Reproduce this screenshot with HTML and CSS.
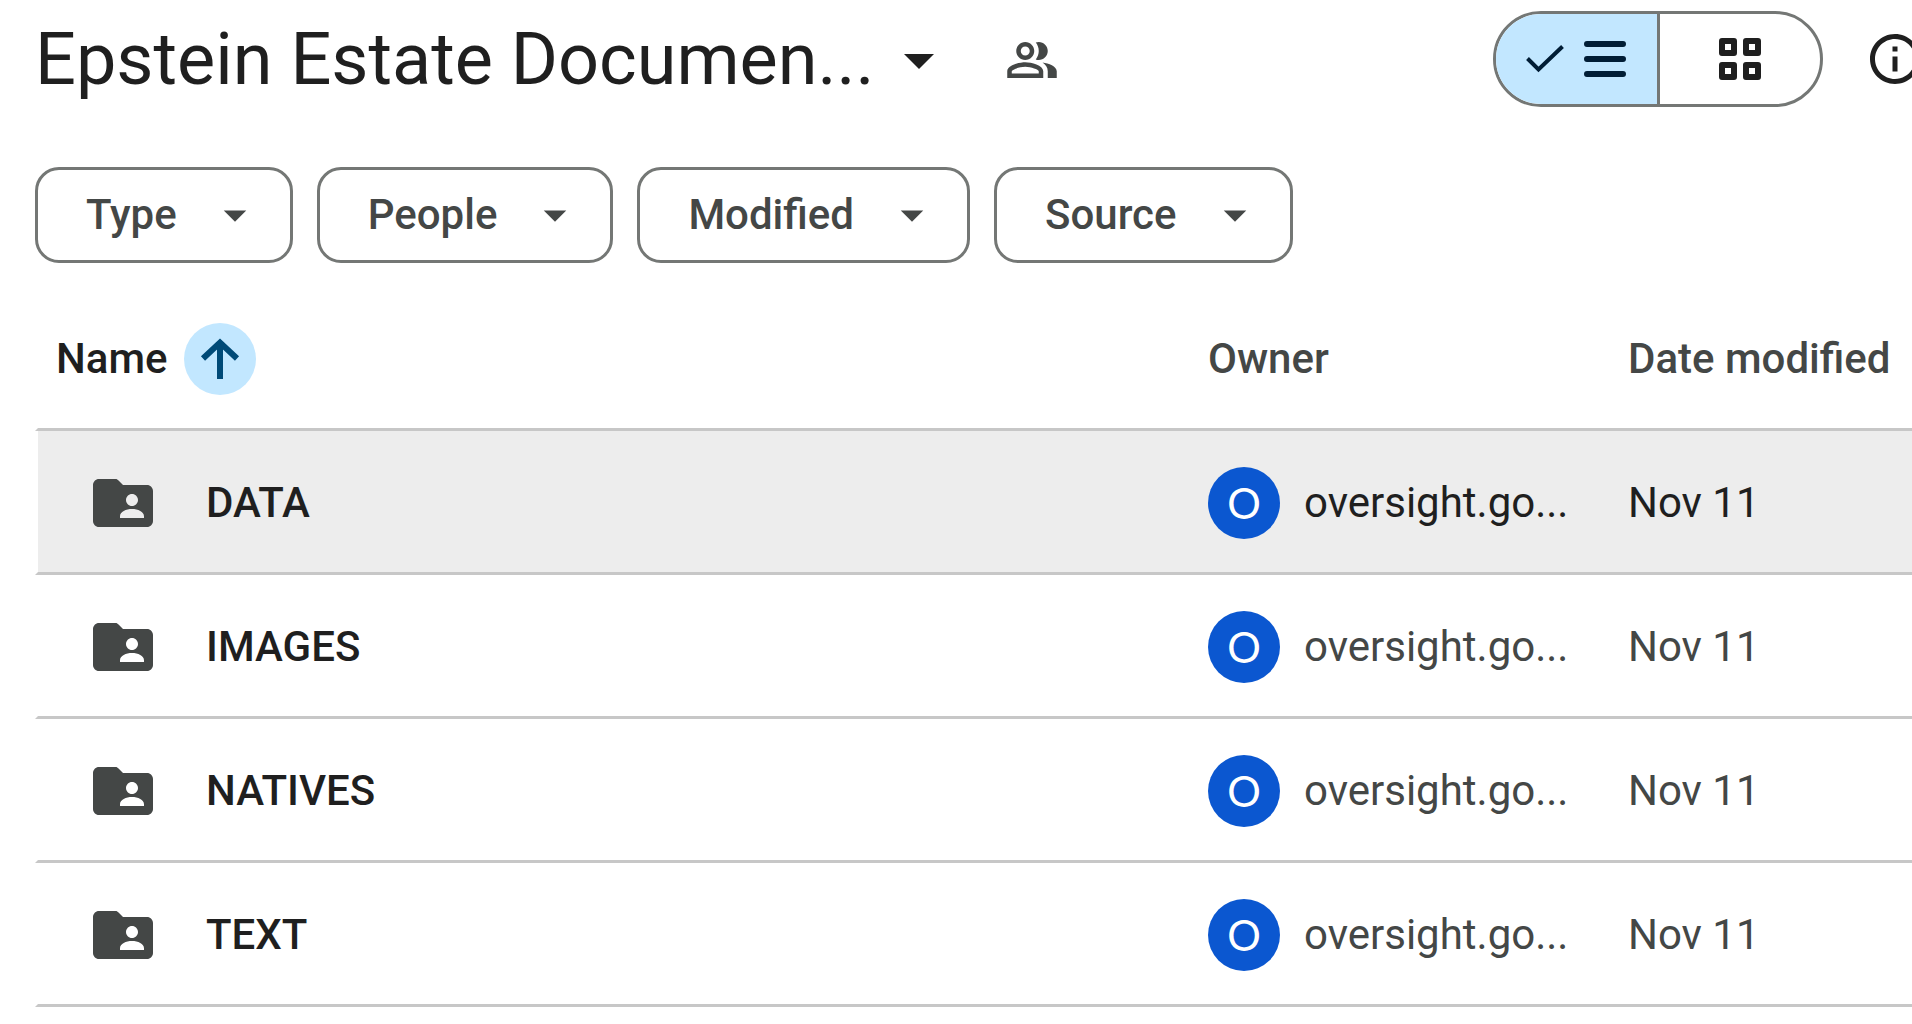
FILE: index.html
```html
<!DOCTYPE html>
<html lang="en">
<head>
  <meta charset="UTF-8">
  <title>Epstein Estate Documents</title>
  <link rel="stylesheet" href="styles.css">
</head>
<body>

<!-- shared icons -->
<svg class="sprite" aria-hidden="true">
  <symbol id="caret" viewBox="0 0 24 24"><path d="M7 10l5 5 5-5z"/></symbol>
  <symbol id="folder" viewBox="0 0 24 24">
    <path fill-rule="evenodd" d="M20 6h-8l-1.400-1.400C10.200 4.200 9.900 4 9.600 4H4c-1.100 0-2 .9-2 2v12c0 1.100.9 2 2 2h16c1.100 0 2-.9 2-2V8c0-1.100-.9-2-2-2zm-5 3c1.100 0 2 .9 2 2s-.9 2-2 2-2-.9-2-2 .9-2 2-2zm4 8h-8v-.6c0-1.500 2-2.400 4-2.400s4 .9 4 2.400z"/>
  </symbol>
</svg>

<header class="header">
  <div class="title-group">
    <h1 class="title"><button class="title-btn" type="button">Epstein Estate Documen...<svg class="title-caret"><use href="#caret"/></svg></button></h1>
    <button class="icon-btn people-btn" type="button" aria-label="Manage access">
      <svg class="people-icon" viewBox="0 0 24 24">
        <path d="M9 12c2.210 0 4-1.790 4-4s-1.790-4-4-4-4 1.790-4 4 1.790 4 4 4zm0-6c1.100 0 2 .9 2 2s-.9 2-2 2-2-.9-2-2 .9-2 2-2z"/>
        <path d="M9 13c-2.670 0-8 1.340-8 4v3h16v-3c0-2.660-5.330-4-8-4zm6 5H3v-.99C3.200 16.290 6.300 15 9 15s5.800 1.290 6 2v1z"/>
        <path d="M15 12c2.210 0 4-1.790 4-4s-1.790-4-4-4c-.47 0-.91.1-1.330.24C14.500 5.270 15 6.580 15 8s-.5 2.730-1.330 3.760c.42.14.86.24 1.330.24z"/>
        <path d="M16.670 13.130C18.040 14.060 19 15.320 19 17v3h4v-3c0-2.180-3.580-3.470-6.330-3.870z"/>
      </svg>
    </button>
  </div>

  <div class="actions">
    <div class="view-toggle" role="group" aria-label="Layout">
      <button class="view-btn active" type="button" aria-label="List view" aria-pressed="true">
        <svg class="check-icon" viewBox="0 0 38 28"><path d="M1.500 13.500L12.500 24.500 36.500 1.500" fill="none" stroke="currentColor" stroke-width="4"/></svg>
        <svg class="view-icon" viewBox="0 0 42 42"><path d="M3 6h36M3 21h36M3 36h36" stroke="currentColor" stroke-width="6" stroke-linecap="round"/></svg>
      </button>
      <button class="view-btn" type="button" aria-label="Grid view" aria-pressed="false">
        <svg class="view-icon" viewBox="0 0 42 42">
          <g fill="none" stroke="currentColor" stroke-width="6" stroke-linejoin="round">
            <path d="M3 3h12v12H3zM27 3h12v12H27zM3 27h12v12H3zM27 27h12v12H27z"/>
          </g>
        </svg>
      </button>
    </div>
    <button class="icon-btn" type="button" aria-label="View details">
      <svg class="info-icon" viewBox="0 0 24 24"><path d="M11 7h2v2h-2zm0 4h2v6h-2zm1-9C6.480 2 2 6.480 2 12s4.480 10 10 10 10-4.480 10-10S17.520 2 12 2zm0 18c-4.410 0-8-3.590-8-8s3.590-8 8-8 8 3.590 8 8-3.590 8-8 8z"/></svg>
    </button>
  </div>
</header>

<div class="filters">
  <button class="chip" type="button">Type<svg class="chip-caret"><use href="#caret"/></svg></button>
  <button class="chip" type="button">People<svg class="chip-caret"><use href="#caret"/></svg></button>
  <button class="chip" type="button">Modified<svg class="chip-caret"><use href="#caret"/></svg></button>
  <button class="chip" type="button">Source<svg class="chip-caret"><use href="#caret"/></svg></button>
</div>

<table class="files">
  <thead>
    <tr>
      <th class="col-name">
        <div class="sort">Name
          <button class="sort-btn" type="button" aria-label="Reverse sort direction">
            <svg class="sort-icon" viewBox="0 0 42 42"><path d="M21 41V5M4 20.500L21 4.500 38 20.500" fill="none" stroke="currentColor" stroke-width="6"/></svg>
          </button>
        </div>
      </th>
      <th class="col-owner">Owner</th>
      <th class="col-date">Date modified</th>
    </tr>
  </thead>
  <tbody>
    <tr class="hover">
      <td><div class="file"><svg class="folder"><use href="#folder"/></svg>DATA</div></td>
      <td><div class="owner"><span class="avatar">O</span>oversight.go...</div></td>
      <td>Nov 11</td>
    </tr>
    <tr>
      <td><div class="file"><svg class="folder"><use href="#folder"/></svg>IMAGES</div></td>
      <td><div class="owner"><span class="avatar">O</span>oversight.go...</div></td>
      <td>Nov 11</td>
    </tr>
    <tr>
      <td><div class="file"><svg class="folder"><use href="#folder"/></svg>NATIVES</div></td>
      <td><div class="owner"><span class="avatar">O</span>oversight.go...</div></td>
      <td>Nov 11</td>
    </tr>
    <tr>
      <td><div class="file"><svg class="folder"><use href="#folder"/></svg>TEXT</div></td>
      <td><div class="owner"><span class="avatar">O</span>oversight.go...</div></td>
      <td>Nov 11</td>
    </tr>
  </tbody>
</table>

</body>
</html>
```
FILE: styles.css
```css
* {
  box-sizing: border-box;
}
body {
  margin: 0;
  padding: 11px 0 0 35px;
  background: #fff;
  color: #444746;
  font-family: Roboto, "Liberation Sans", sans-serif;
  font-size: 42px;
  line-height: 60px;
  overflow-x: hidden;
}
button {
  margin: 0;
  padding: 0;
  border: 0;
  background: none;
  color: inherit;
  font: inherit;
  cursor: pointer;
}
svg {
  display: block;
  flex: none;
  fill: currentColor;
}
.sprite {
  position: absolute;
  width: 0;
  height: 0;
}

/* header */
.header,
.title-group,
.title-btn,
.actions {
  display: flex;
  align-items: center;
}
.header {
  justify-content: space-between;
  height: 96px;
}
.title-group {
  padding-top: 2px;
}
.title {
  margin: 0;
  font-size: 72px;
  font-weight: 400;
  line-height: 96px;
  color: #1f1f1f;
}
.title-btn {
  gap: 8px;
  white-space: nowrap;
}
.title-caret {
  width: 72px;
  height: 72px;
}
.people-btn {
  margin-left: 50px;
}
.people-icon {
  width: 54px;
  height: 54px;
}
.actions {
  gap: 42px;
  margin-right: -13px;
  color: #1f1f1f;
}
.view-toggle {
  display: flex;
  width: 330px;
  height: 96px;
  border: 3px solid #747775;
  border-radius: 48px;
  overflow: hidden;
}
.view-btn {
  display: flex;
  flex: 1;
  align-items: center;
  justify-content: center;
  gap: 20px;
}
.view-btn.active {
  border-right: 3px solid #747775;
  background: #c2e7ff;
  color: #001d35;
}
.check-icon {
  width: 38px;
  height: 28px;
}
.view-icon {
  width: 42px;
  height: 42px;
}
.info-icon {
  width: 60px;
  height: 60px;
}

/* filter chips */
.filters {
  display: flex;
  gap: 24px;
  margin: 60px 0 27px;
}
.chip {
  display: flex;
  align-items: center;
  gap: 31px;
  height: 96px;
  padding: 0 28px 0 48px;
  border: 3px solid #747775;
  border-radius: 24px;
  font-weight: 500;
}
.chip-caret {
  width: 54px;
  height: 54px;
}

/* file list */
.files {
  width: 100%;
  border-spacing: 0;
  table-layout: fixed;
}
th,
td {
  padding: 0;
  border-bottom: 3px solid #c7c7c7;
  text-align: left;
  white-space: nowrap;
}
th {
  height: 141px;
  font-weight: 500;
}
td {
  height: 144px;
  padding-top: 2px;
}
th:first-child,
td:first-child {
  border-left: 3px solid transparent;
  background-clip: padding-box;
  color: #1f1f1f;
  font-weight: 500;
}
.col-owner {
  width: 420px;
}
.col-date {
  width: 284px;
}
.sort {
  display: flex;
  align-items: center;
  gap: 16px;
  padding-left: 18px;
}
.sort-btn {
  display: flex;
  align-items: center;
  justify-content: center;
  width: 72px;
  height: 72px;
  border-radius: 50%;
  background: #c2e7ff;
  color: #004a77;
}
.sort-icon {
  width: 42px;
  height: 42px;
}
.file {
  display: flex;
  align-items: center;
  gap: 47px;
  padding-left: 49px;
}
.folder {
  width: 72px;
  height: 72px;
  color: #444746;
}
.owner {
  display: flex;
  align-items: center;
  gap: 24px;
}
.avatar {
  width: 72px;
  height: 72px;
  border-radius: 50%;
  background: #0b57d0;
  color: #fff;
  font-family: Lato, Roboto, sans-serif;
  line-height: 72px;
  text-align: center;
}
.hover td {
  background-color: #ededed;
  color: #1f1f1f;
}
```
